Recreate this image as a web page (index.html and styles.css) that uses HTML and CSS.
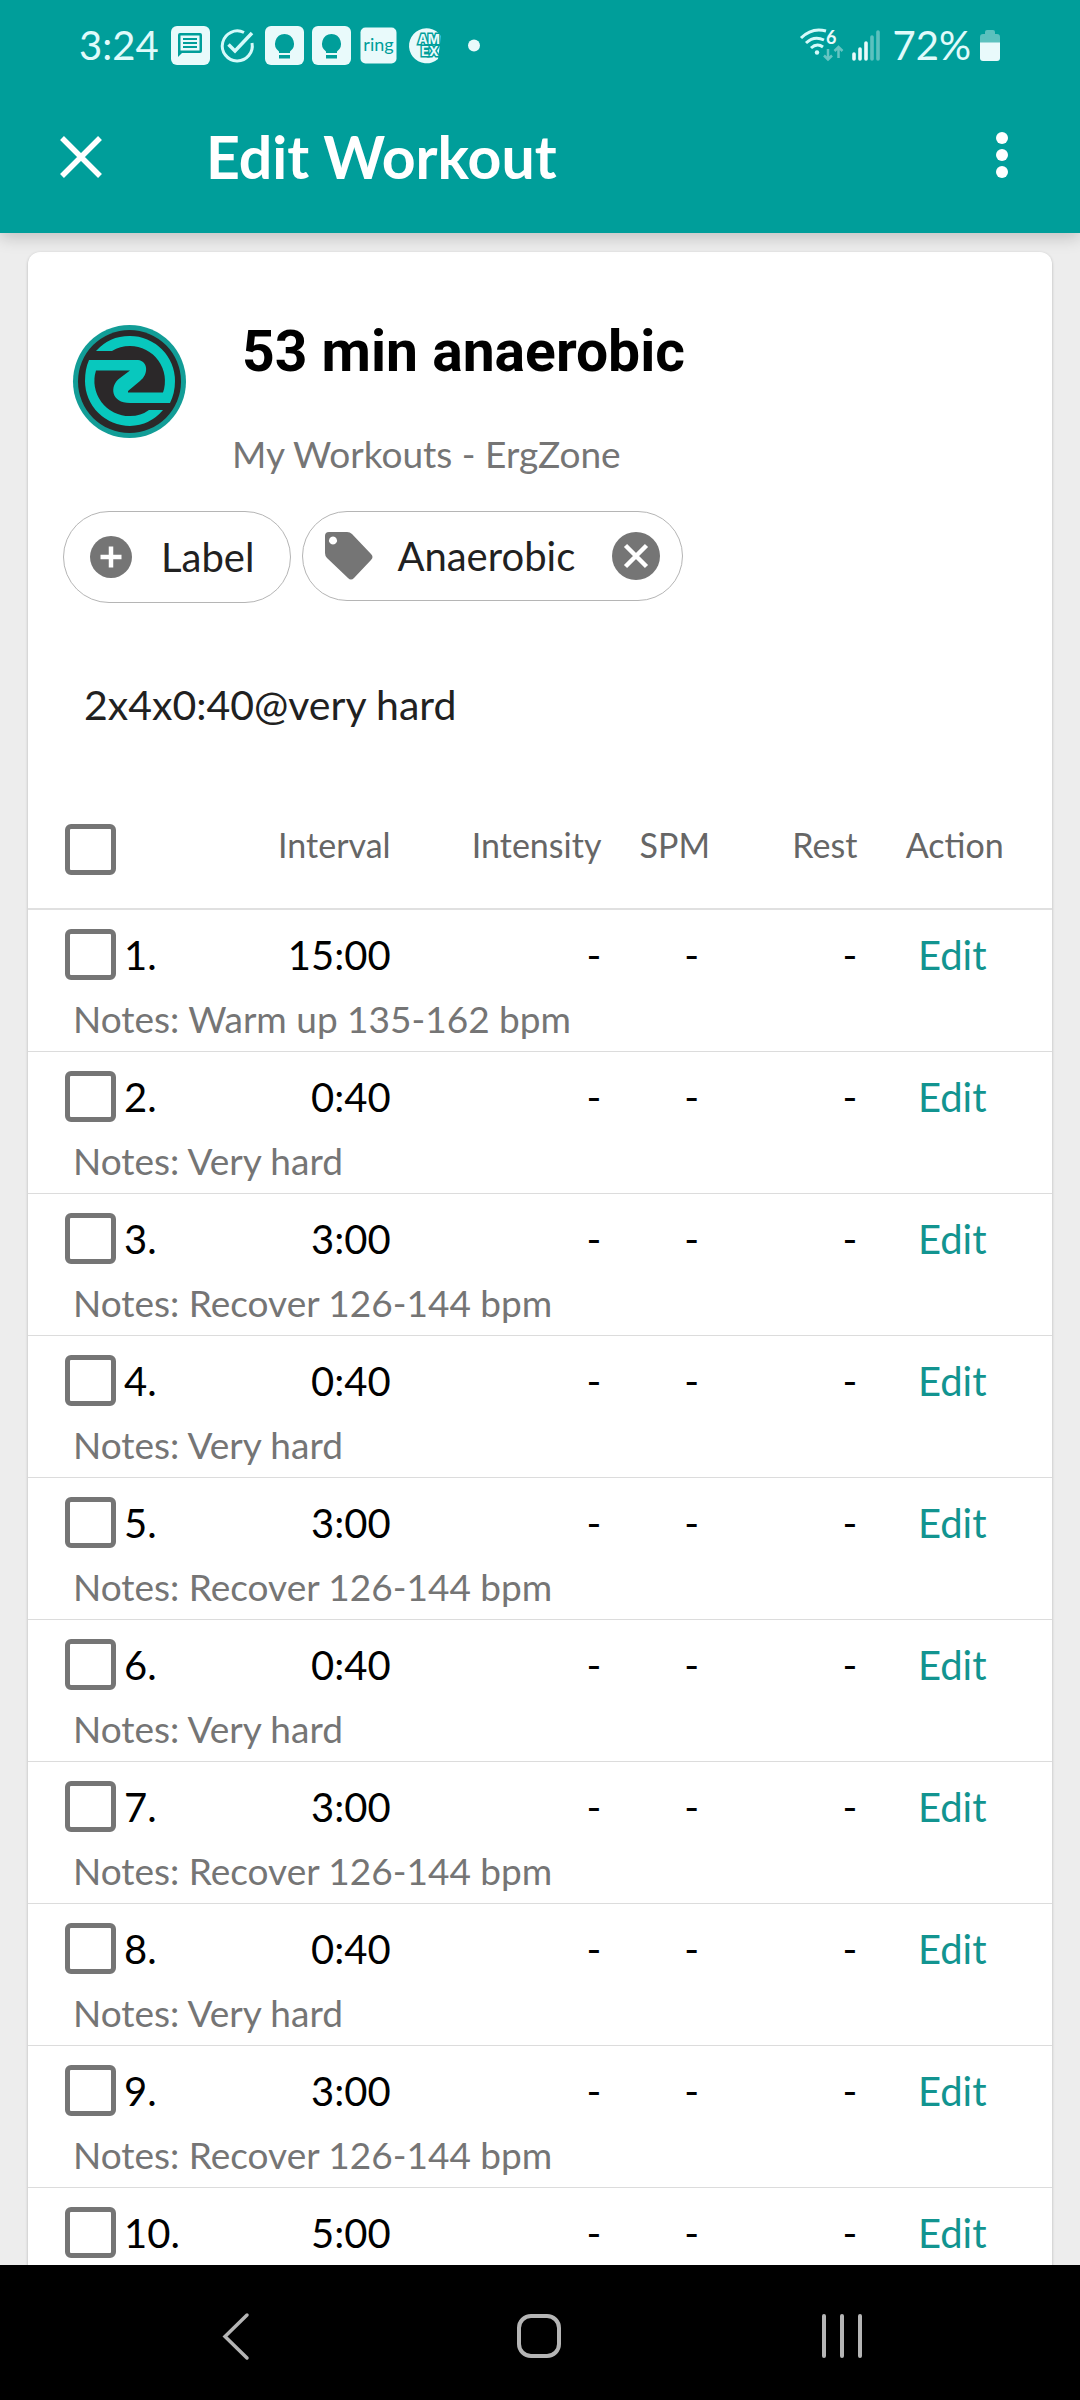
FILE: index.html
```html
<!DOCTYPE html>
<html lang="en">
<head>
<meta charset="utf-8">
<meta name="viewport" content="width=device-width, initial-scale=1">
<title>Edit Workout</title>
<link rel="stylesheet" href="styles.css">
</head>
<body>
<header class="top">
  <div class="status">
    <span class="clock">3:24</span>
    <div class="status-icons">
      <svg class="sicon" viewBox="0 0 39 39"><rect width="39" height="39" rx="6" fill="#e9fafb"/><path d="M7 31V9a2 2 0 0 1 2-2h20a2 2 0 0 1 2 2v16a2 2 0 0 1-2 2H11z" fill="#009e9a"/><path d="M9.500 9.500h19v15h-19z" fill="#e9fafb"/><path d="M12 13h14M12 17h14M12 21h14" stroke="#009e9a" stroke-width="2.200"/></svg>
      <svg class="sicon" viewBox="0 0 39 39"><path d="M26 6.500A15 15 0 1 0 34 17" fill="none" stroke="#d5fafa" stroke-width="3"/><path d="M10.500 18.500l6.500 6.500L34 7" fill="none" stroke="#d5fafa" stroke-width="3.500"/></svg>
      <svg class="sicon" viewBox="0 0 39 39"><rect width="39" height="39" rx="6" fill="#e9fafb"/><path d="M19.500 8a9.700 9.700 0 0 0-5.500 17.500V27h11v-1.500A9.700 9.700 0 0 0 19.500 8z" fill="#009e9a"/><path d="M14 29h11v3.500H14z" fill="#009e9a"/></svg>
      <svg class="sicon" viewBox="0 0 39 39"><rect width="39" height="39" rx="6" fill="#e9fafb"/><path d="M19.500 8a9.700 9.700 0 0 0-5.500 17.500V27h11v-1.500A9.700 9.700 0 0 0 19.500 8z" fill="#009e9a"/><path d="M14 29h11v3.500H14z" fill="#009e9a"/></svg>
      <svg class="sicon" viewBox="0 0 39 39"><rect x="1.500" y="1.500" width="36" height="36" rx="5" fill="#e9fafb"/><text x="19.500" y="25" text-anchor="middle" font-size="18" fill="#009e9a">ring</text></svg>
      <svg class="sicon" viewBox="0 0 39 39"><path d="M35 10a17.500 17.500 0 1 0-3 23z" fill="#e9fafb"/><g font-family="Inter, sans-serif" font-weight="700" font-size="13" fill="#e9fafb" stroke="#009e9a" stroke-width="3" paint-order="stroke"><text x="12" y="18">AM</text><text x="15" y="30">EX</text></g></svg>
      <svg class="sicon" viewBox="0 0 39 39"><circle cx="21" cy="19.500" r="6" fill="#e9fafb"/></svg>
    </div>
    <div class="status-right">
      <svg class="wifi" viewBox="0 0 44 36"><g fill="none" stroke="#d5fafa" stroke-width="3"><path d="M1 11Q12 0 26 4"/><path d="M6 16Q14 8.500 24 13"/><path d="M11 21Q17 15.500 23 20"/></g><circle cx="17" cy="25.500" r="2.200" fill="#d5fafa"/><text x="26" y="17" font-size="18" font-weight="700" fill="#e9fafb">6</text><path d="M28 22v10M24 28.500l4 4 4-4M38.500 31V20M34.500 24l4-4 4 4" fill="none" stroke="#66c5c2" stroke-width="2.500"/></svg>
      <svg class="signal" viewBox="0 0 28 36"><path d="M2 27v5M8 22v10M14 16v16" stroke="#e9fafb" stroke-width="3.600" stroke-linecap="round"/><path d="M20 10v22M26 5v27" stroke="#5cc1be" stroke-width="3.600" stroke-linecap="round"/></svg>
      <span class="percent">72%</span>
      <svg class="battery" viewBox="0 0 22 36"><path d="M6 5a2 2 0 0 1 2-2h6a2 2 0 0 1 2 2v2h2a3 3 0 0 1 3 3v6H1v-6a3 3 0 0 1 3-3h2z" fill="#5cc1be"/><path d="M1 15.500h20V31a3 3 0 0 1-3 3H4a3 3 0 0 1-3-3z" fill="#e9fafb"/></svg>
    </div>
  </div>
  <div class="appbar">
    <button class="icon-btn" aria-label="Close"><svg class="close" viewBox="0 0 42 42"><path d="M2 2l38 38M40 2L2 40" stroke="#fff" stroke-width="5.500"/></svg></button>
    <h1 class="page-title">Edit Workout</h1>
    <button class="icon-btn" aria-label="More options"><svg class="more" viewBox="0 0 12 48"><g fill="#fff"><circle cx="6" cy="5" r="6"/><circle cx="6" cy="22" r="6"/><circle cx="6" cy="39" r="6"/></g></svg></button>
  </div>
</header>

<main class="content">
  <section class="card">
    <div class="intro">
      <svg class="logo" viewBox="0 0 113 113"><circle cx="56.500" cy="56.500" r="56.500" fill="#129d97"/><circle cx="56.500" cy="56.500" r="51.500" fill="#2b2829"/><path fill="#08c8be" d="M23 26A45 45 0 0 1 57 11A45 45 0 0 1 102 56Q102 68 97 78H57C38 78 36 61 47 53L57 45.500H23A35 35 0 0 0 57 91Q68 91 76 85H90A45 45 0 0 1 57 101A45 45 0 0 1 12 56Q12 44 16 35H65C75 36 76 49 67 56L55 66V67.500H90A35 35 0 0 0 57 21Q47 21 39 26z"/></svg>
      <div class="intro-text">
        <input class="name" type="text" value="53 min anaerobic" aria-label="Workout name">
        <p class="source">My Workouts - ErgZone</p>
      </div>
    </div>
    <div class="chips">
      <button class="chip add"><svg class="plus" viewBox="0 0 42 42"><circle cx="21" cy="21" r="21" fill="#757575"/><path d="M21 10.500v21M10.500 21h21" stroke="#fff" stroke-width="4.500"/></svg>Label</button>
      <div class="chip tag"><svg class="tagicon" viewBox="0 0 48 48"><path fill="#757575" fill-rule="evenodd" d="M4 0h18q3 0 5 2l19 20q3 3 0 6L29 46q-3 3-6 0L2 26q-2-2-2-5V4q0-4 4-4zm4 4.500a4 4 0 1 0 .01 0z"/></svg>Anaerobic<button class="remove" aria-label="Remove Anaerobic"><svg class="removeicon" viewBox="0 0 48 48"><circle cx="24" cy="24" r="24" fill="#757575"/><path d="M13.500 13.500l21 21M34.500 13.500l-21 21" stroke="#fff" stroke-width="4.500"/></svg></button></div>
    </div>
    <input class="description" type="text" value="2x4x0:40@very hard" aria-label="Description">

    <table class="intervals">
      <colgroup><col class="c-num"><col class="c-interval"><col class="c-intensity"><col class="c-spm"><col class="c-rest"><col class="c-action"></colgroup>
      <thead>
        <tr><th class="pick"><input type="checkbox" aria-label="Select all"></th><th>Interval</th><th>Intensity</th><th>SPM</th><th>Rest</th><th class="act">Action</th></tr>
      </thead>
      <tbody>
        <tr class="main"><td class="pick"><label><input type="checkbox">1.</label></td><td>15:00</td><td>-</td><td class="spm">-</td><td>-</td><td class="act"><a href="#">Edit</a></td></tr>
        <tr class="notes"><td colspan="6">Notes: Warm up 135-162 bpm</td></tr>
        <tr class="main"><td class="pick"><label><input type="checkbox">2.</label></td><td>0:40</td><td>-</td><td class="spm">-</td><td>-</td><td class="act"><a href="#">Edit</a></td></tr>
        <tr class="notes"><td colspan="6">Notes: Very hard</td></tr>
        <tr class="main"><td class="pick"><label><input type="checkbox">3.</label></td><td>3:00</td><td>-</td><td class="spm">-</td><td>-</td><td class="act"><a href="#">Edit</a></td></tr>
        <tr class="notes"><td colspan="6">Notes: Recover 126-144 bpm</td></tr>
        <tr class="main"><td class="pick"><label><input type="checkbox">4.</label></td><td>0:40</td><td>-</td><td class="spm">-</td><td>-</td><td class="act"><a href="#">Edit</a></td></tr>
        <tr class="notes"><td colspan="6">Notes: Very hard</td></tr>
        <tr class="main"><td class="pick"><label><input type="checkbox">5.</label></td><td>3:00</td><td>-</td><td class="spm">-</td><td>-</td><td class="act"><a href="#">Edit</a></td></tr>
        <tr class="notes"><td colspan="6">Notes: Recover 126-144 bpm</td></tr>
        <tr class="main"><td class="pick"><label><input type="checkbox">6.</label></td><td>0:40</td><td>-</td><td class="spm">-</td><td>-</td><td class="act"><a href="#">Edit</a></td></tr>
        <tr class="notes"><td colspan="6">Notes: Very hard</td></tr>
        <tr class="main"><td class="pick"><label><input type="checkbox">7.</label></td><td>3:00</td><td>-</td><td class="spm">-</td><td>-</td><td class="act"><a href="#">Edit</a></td></tr>
        <tr class="notes"><td colspan="6">Notes: Recover 126-144 bpm</td></tr>
        <tr class="main"><td class="pick"><label><input type="checkbox">8.</label></td><td>0:40</td><td>-</td><td class="spm">-</td><td>-</td><td class="act"><a href="#">Edit</a></td></tr>
        <tr class="notes"><td colspan="6">Notes: Very hard</td></tr>
        <tr class="main"><td class="pick"><label><input type="checkbox">9.</label></td><td>3:00</td><td>-</td><td class="spm">-</td><td>-</td><td class="act"><a href="#">Edit</a></td></tr>
        <tr class="notes"><td colspan="6">Notes: Recover 126-144 bpm</td></tr>
        <tr class="main"><td class="pick"><label><input type="checkbox">10.</label></td><td>5:00</td><td>-</td><td class="spm">-</td><td>-</td><td class="act"><a href="#">Edit</a></td></tr>
      </tbody>
    </table>
  </section>
</main>

<nav class="sysnav" aria-label="System">
  <button class="icon-btn" aria-label="Back"><svg class="navicon" viewBox="0 0 48 48"><path d="M35 3L13 24.500 35 46" fill="none" stroke="#b5b5b5" stroke-width="3.500" stroke-linecap="round"/></svg></button>
  <button class="icon-btn" aria-label="Home"><svg class="navicon" viewBox="0 0 48 48"><rect x="4" y="4" width="40" height="40" rx="12" fill="none" stroke="#b5b5b5" stroke-width="4"/></svg></button>
  <button class="icon-btn" aria-label="Recents"><svg class="navicon" viewBox="0 0 48 48"><path d="M6 4v40M24 4v40M42 4v40" stroke="#b5b5b5" stroke-width="4" stroke-linecap="round"/></svg></button>
</nav>
</body>
</html>
```
FILE: styles.css
```css
* { box-sizing: border-box; }

body {
  margin: 0;
  height: 100vh;
  display: flex;
  flex-direction: column;
  background: #ededed;
  color: #000;
  font-family: Lato, sans-serif;
  font-size: 40px;
}

button, input { font: inherit; color: inherit; }
button { padding: 0; border: 0; background: none; display: flex; align-items: center; }
svg { display: block; flex: none; overflow: visible; }

.top {
  position: relative;
  background: #009e9a;
  color: #fff;
  box-shadow: 0 4px 16px rgba(0, 0, 0, 0.2);
}

.status {
  display: flex;
  align-items: center;
  height: 90px;
  padding: 0 79px;
  color: #e0fbfb;
}
.clock { width: 92px; }
.status-icons { display: flex; gap: 8px; }
.status-right { display: flex; align-items: center; margin-left: auto; gap: 8px; }
.sicon { width: 39px; height: 39px; }
.wifi { width: 44px; height: 36px; }
.signal { width: 28px; height: 36px; margin-right: 5px; }
.battery { width: 22px; height: 36px; }

.appbar {
  display: flex;
  align-items: center;
  height: 143px;
  padding: 0 72px 10px 60px;
}
.close { width: 42px; height: 42px; }
.more { width: 12px; height: 48px; }
.page-title { flex: 1; margin: 0 0 0 104px; font-size: 59px; line-height: 72px; font-weight: 700; }

.content {
  flex: 1;
  min-height: 0;
  overflow-y: auto;
  scrollbar-width: none;
  padding: 19px 28px 0;
}

.card {
  background: #fff;
  border-radius: 12px;
  box-shadow: 0 1px 3px rgba(0, 0, 0, 0.25);
  padding-top: 60px;
}

.intro { display: flex; padding: 0 45px; }
.logo { width: 113px; height: 113px; margin-top: 13px; }
.intro-text { flex: 1; padding-left: 46px; }
.name {
  display: block;
  width: 100%;
  height: 78px;
  padding: 0 10px;
  border: 0;
  background: none;
  font-family: Roboto, sans-serif;
  font-size: 57px;
  font-weight: 700;
}
.source { margin: 40px 0 0; font-size: 37px; line-height: 48px; color: #757575; }

.chips { display: flex; align-items: flex-start; gap: 11px; padding: 33px 35px 0; color: #212121; }
.chip { display: flex; align-items: center; border: 1px solid #b5b5b5; border-radius: 48px; }
.add { height: 92px; padding: 0 36px 0 26px; gap: 29px; }
.tag { height: 90px; padding: 0 22px; gap: 24px; }
.plus { width: 42px; height: 42px; }
.tagicon, .removeicon { width: 48px; height: 48px; }
.remove { margin-left: 13px; }

.description {
  display: block;
  width: 100%;
  height: 96px;
  margin-top: 53px;
  padding: 0 56px;
  border: 0;
  background: none;
  color: #212121;
  font-size: 41px;
}

.intervals { width: 100%; margin-top: 39px; border-collapse: separate; border-spacing: 0; table-layout: fixed; }
.c-num { width: 14%; }
.c-interval { width: 22%; }
.c-intensity { width: 20%; }
.c-spm { width: 11%; }
.c-rest { width: 14%; }
.c-action { width: 19%; }
.intervals th, .intervals td { padding: 0; text-align: right; }
.intervals th { height: 119px; padding-bottom: 10px; border-bottom: 2px solid #e0e0e0; font-size: 34px; font-weight: 400; color: #666; }
.intervals .pick { text-align: left; padding: 0 0 0 37px; }
.intervals .pick label { display: flex; align-items: center; gap: 8px; }
.intervals td:nth-child(2), .intervals th:nth-child(2) { padding-right: 6px; }
.intervals th:nth-child(4) { padding-right: 4px; }
.intervals .spm { padding-right: 15px; }
.intervals .act { text-align: center; }
.intervals td.act { padding-right: 5px; }
.main td { height: 89px; }
.intervals .notes td { height: 53px; padding: 0 45px 12px; text-align: left; border-bottom: 1px solid #dcdcdc; font-size: 37px; line-height: 40px; color: #757575; }
.intervals a { color: #129490; text-decoration: none; }

input[type="checkbox"] {
  appearance: none;
  display: block;
  flex: none;
  width: 51px;
  height: 51px;
  margin: 0;
  border: 5px solid #757575;
  border-radius: 6px;
}

.sysnav {
  display: flex;
  align-items: center;
  justify-content: space-around;
  height: 135px;
  padding: 6px 87px 0 85px;
  background: #000;
  position: relative;
}
.navicon { width: 48px; height: 48px; }
```
